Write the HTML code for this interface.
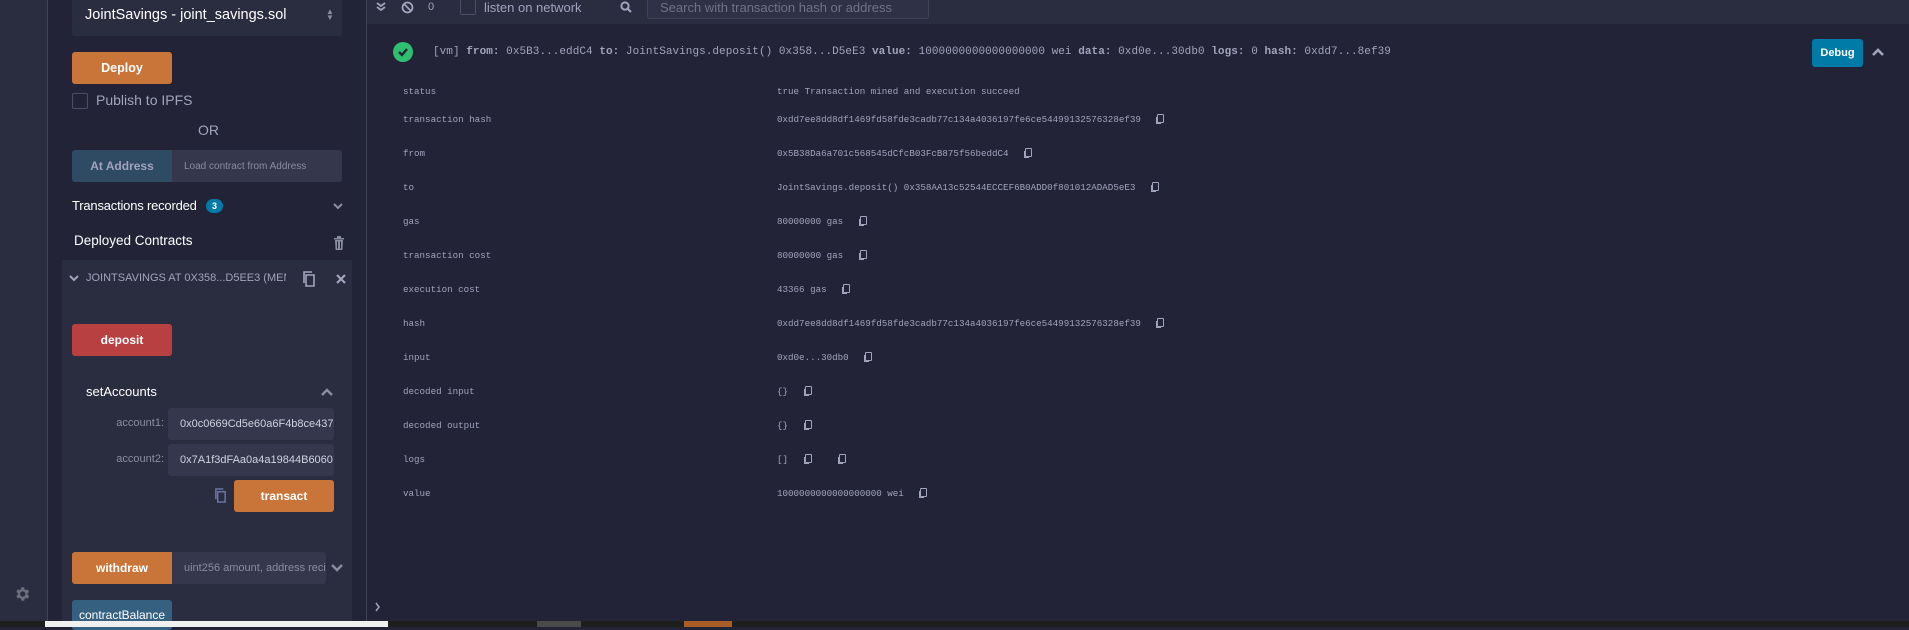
<!DOCTYPE html>
<html><head><meta charset="utf-8"><style>
*{margin:0;padding:0;box-sizing:border-box}
body{width:1909px;height:627px;overflow:hidden;background:#222336;font-family:"Liberation Sans",sans-serif;position:relative;color:#a2a3bd}
.a{position:absolute}
.btn{position:absolute;color:#fff;font-weight:bold;font-size:12px;display:flex;align-items:center;justify-content:center;border-radius:3px}
.inp{position:absolute;background:#35384c;font-size:11px;display:flex;align-items:center;border-radius:3px}
.mono{font-family:"Liberation Mono",monospace}
.row{position:absolute;font-family:"Liberation Mono",monospace;font-size:9.2px;color:#a2a3bd;white-space:nowrap}
.cp{display:inline-block;width:7px;height:9px;border:1.3px solid #a2a3bd;border-radius:1px;position:relative;vertical-align:-1px;box-shadow:-2px 2px 0 -1px #a2a3bd}
</style></head><body>
<div class="a" style="left:0;top:0;width:47px;height:621px;background:#2a2c3f"></div>
<div class="a" style="left:47px;top:0;width:1px;height:621px;background:#3f4455"></div>
<svg class="a" style="left:13px;top:585px" width="18" height="18" viewBox="0 0 24 24"><path fill="#6b6e7c" d="M19.4 13a7.5 7.5 0 000-2l2.1-1.6-2-3.5-2.5 1a7.6 7.6 0 00-1.7-1L15 3h-4l-.4 2.6a7.6 7.6 0 00-1.7 1l-2.5-1-2 3.5L6.5 11a7.5 7.5 0 000 2l-2.1 1.6 2 3.5 2.5-1c.5.4 1.1.7 1.7 1L11 21h4l.4-2.6c.6-.3 1.2-.6 1.7-1l2.5 1 2-3.5zM13 15.5a3.5 3.5 0 110-7 3.5 3.5 0 010 7z"/></svg>
<div class="a" style="left:366px;top:0;width:1px;height:621px;background:#3f4455"></div>
<div class="a" style="left:72px;top:0;width:270px;height:36px;background:#2a2c3f;border-radius:0 0 3px 3px;color:#fff;font-size:14.5px;padding:7px 0 0 13px">JointSavings - joint_savings.sol<span class="a" style="left:254px;top:9px;font-size:8px;line-height:6px;color:#8a8ca0">▲<br>▼</span></div>
<div class="btn" style="left:72px;top:52px;width:100px;height:32px;background:#c97539;font-size:12.5px">Deploy</div>
<div class="a" style="left:72px;top:93px;width:16px;height:16px;border:1px solid #4c4f63;border-radius:2px"></div>
<div class="a" style="left:96px;top:92px;font-size:14px;color:#a2a3bd">Publish to IPFS</div>
<div class="a" style="left:198px;top:122px;font-size:14px;color:#a2a3bd">OR</div>
<div class="btn" style="left:72px;top:150px;width:100px;height:32px;background:#2f4a63;color:#a2a3bd;border-radius:3px 0 0 3px">At Address</div>
<div class="inp" style="left:172px;top:150px;width:170px;height:32px;padding-left:12px;color:#8a8ca0;border-radius:0 3px 3px 0;font-size:10px">Load contract from Address</div>
<div class="a" style="left:72px;top:198px;font-size:13px;color:#fff;letter-spacing:-0.2px">Transactions recorded</div>
<div class="a" style="left:206px;top:199px;width:17px;height:14px;border-radius:7px;background:#007aa6;color:#fff;font-size:9px;font-weight:bold;text-align:center;line-height:14px">3</div>
<svg class="a" style="left:333px;top:203px" width="10" height="7"><path d="M1 1l4 4 4-4" stroke="#8a8ca0" stroke-width="2" fill="none"/></svg>
<div class="a" style="left:74px;top:233px;font-size:13.5px;color:#fff">Deployed Contracts</div>
<svg class="a" style="left:333px;top:236px" width="12" height="14" viewBox="0 0 12 14"><path fill="#8a8ca0" d="M1 2h10v1.5H1zM4 0h4v2H4zM2 4h8l-.6 10H2.6zM4 5.5v7h1v-7zM7 5.5v7h1v-7z"/></svg>
<div class="a" style="left:62px;top:260px;width:290px;height:361px;background:#2a2c3f"></div>
<svg class="a" style="left:69px;top:275px" width="10" height="7"><path d="M1 1l4 4 4-4" stroke="#a2a3bd" stroke-width="2" fill="none"/></svg>
<div class="a" style="left:86px;top:272px;font-size:11px;color:#a2a3bd;width:200px;overflow:hidden;white-space:nowrap">JOINTSAVINGS AT 0X358...D5EE3 (MEMORY)</div>
<svg class="a" style="left:302px;top:271px" width="14" height="16" viewBox="0 0 14 16"><path d="M4 4h8v11H4zM2 12V1h8" stroke="#a2a3bd" stroke-width="1.6" fill="none"/></svg>
<svg class="a" style="left:336px;top:274px" width="10" height="10"><path d="M1 1l8 8M9 1l-8 8" stroke="#a2a3bd" stroke-width="2.2"/></svg>
<div class="btn" style="left:72px;top:324px;width:100px;height:32px;background:#b84040">deposit</div>
<div class="a" style="left:86px;top:384px;font-size:13px;color:#fff">setAccounts</div>
<svg class="a" style="left:321px;top:388px" width="12" height="8"><path d="M1 7l5-5 5 5" stroke="#8a8ca0" stroke-width="2.4" fill="none"/></svg>
<div class="a" style="left:100px;top:417px;width:64px;text-align:right;font-size:11px;color:#8a8ca0">account1:</div>
<div class="inp" style="left:168px;top:408px;width:166px;height:32px;padding-left:12px;color:#d0d2e0;overflow:hidden;white-space:nowrap">0x0c0669Cd5e60a6F4b8ce437</div>
<div class="a" style="left:100px;top:453px;width:64px;text-align:right;font-size:11px;color:#8a8ca0">account2:</div>
<div class="inp" style="left:168px;top:444px;width:166px;height:32px;padding-left:12px;color:#d0d2e0;overflow:hidden;white-space:nowrap">0x7A1f3dFAa0a4a19844B6060</div>
<svg class="a" style="left:214px;top:488px" width="13" height="15" viewBox="0 0 14 16"><path d="M4 4h8v11H4zM2 12V1h8" stroke="#6b75a6" stroke-width="1.6" fill="none"/></svg>
<div class="btn" style="left:234px;top:480px;width:100px;height:32px;background:#c97539">transact</div>
<div class="btn" style="left:72px;top:552px;width:100px;height:32px;background:#c97539;border-radius:3px 0 0 3px">withdraw</div>
<div class="inp" style="left:172px;top:552px;width:154px;height:32px;padding-left:12px;color:#8a8ca0;border-radius:0 3px 3px 0;white-space:nowrap;overflow:hidden">uint256 amount, address reci</div>
<svg class="a" style="left:331px;top:564px" width="12" height="8"><path d="M1 1l5 5 5-5" stroke="#8a8ca0" stroke-width="2.4" fill="none"/></svg>
<div class="btn" style="left:72px;top:600px;width:100px;height:30px;background:#35607f;font-weight:normal;align-items:flex-start;padding-top:8px">contractBalance</div>
<div class="a" style="left:367px;top:0;width:1542px;height:24px;background:#2a2c3f"></div>
<svg class="a" style="left:376px;top:2px" width="10" height="10"><path d="M1 1l4 3 4-3M1 5l4 3 4-3" stroke="#a2a3bd" stroke-width="1.8" fill="none"/></svg>
<svg class="a" style="left:401px;top:1px" width="13" height="13"><circle cx="6.5" cy="6.5" r="5" stroke="#a2a3bd" stroke-width="1.8" fill="none"/><path d="M3 3l7 7" stroke="#a2a3bd" stroke-width="1.8"/></svg>
<div class="a" style="left:428px;top:1px;font-size:11px">0</div>
<div class="a" style="left:460px;top:0;width:16px;height:15px;border:1px solid #4c4f63;border-top:none;border-radius:0 0 2px 2px"></div>
<div class="a" style="left:484px;top:0;font-size:13px;color:#a2a3bd">listen on network</div>
<svg class="a" style="left:620px;top:1px" width="12" height="12"><circle cx="5" cy="5" r="3.6" stroke="#a2a3bd" stroke-width="2" fill="none"/><path d="M7.5 7.5l3.5 3.5" stroke="#a2a3bd" stroke-width="2.2"/></svg>
<div class="a" style="left:647px;top:0;width:282px;height:19px;background:#2f3246;border:1px solid #3f4455;border-top:none;border-radius:0 0 3px 3px;font-size:13px;color:#6f7288;padding:0 0 0 12px;line-height:16px">Search with transaction hash or address</div>
<div class="a" style="left:393px;top:42px;width:20px;height:20px;border-radius:50%;background:#2fbf71"></div>
<svg class="a" style="left:397px;top:46px" width="12" height="12"><path d="M2 6l3 3 5-6" stroke="#222336" stroke-width="2.4" fill="none"/></svg>
<div class="a mono" style="left:433px;top:46px;font-size:11px;color:#a2a3bd;white-space:nowrap;letter-spacing:0.05px">[vm]  <b>from:</b> 0x5B3...eddC4 <b>to:</b> JointSavings.deposit() 0x358...D5eE3 <b>value:</b> 1000000000000000000 wei <b>data:</b> 0xd0e...30db0 <b>logs:</b> 0 <b>hash:</b> 0xdd7...8ef39</div>
<div class="btn" style="left:1812px;top:39px;width:51px;height:28px;background:#007aa6;font-size:11px">Debug</div>
<svg class="a" style="left:1872px;top:48px" width="12" height="8"><path d="M1 7l5-5 5 5" stroke="#a2a3bd" stroke-width="2.6" fill="none"/></svg>
<div class="row" style="left:403px;top:86px">status</div><div class="row" style="left:777px;top:86px">true Transaction mined and execution succeed</div>
<div class="row" style="left:403px;top:114px">transaction hash</div><div class="row" style="left:777px;top:114px">0xdd7ee8dd8df1469fd58fde3cadb77c134a4036197fe6ce54499132576328ef39 &nbsp; <span class="cp"></span></div>
<div class="row" style="left:403px;top:148px">from</div><div class="row" style="left:777px;top:148px">0x5B38Da6a701c568545dCfcB03FcB875f56beddC4 &nbsp; <span class="cp"></span></div>
<div class="row" style="left:403px;top:182px">to</div><div class="row" style="left:777px;top:182px">JointSavings.deposit() 0x358AA13c52544ECCEF6B0ADD0f801012ADAD5eE3 &nbsp; <span class="cp"></span></div>
<div class="row" style="left:403px;top:216px">gas</div><div class="row" style="left:777px;top:216px">80000000 gas &nbsp; <span class="cp"></span></div>
<div class="row" style="left:403px;top:250px">transaction cost</div><div class="row" style="left:777px;top:250px">80000000 gas &nbsp; <span class="cp"></span></div>
<div class="row" style="left:403px;top:284px">execution cost</div><div class="row" style="left:777px;top:284px">43366 gas &nbsp; <span class="cp"></span></div>
<div class="row" style="left:403px;top:318px">hash</div><div class="row" style="left:777px;top:318px">0xdd7ee8dd8df1469fd58fde3cadb77c134a4036197fe6ce54499132576328ef39 &nbsp; <span class="cp"></span></div>
<div class="row" style="left:403px;top:352px">input</div><div class="row" style="left:777px;top:352px">0xd0e...30db0 &nbsp; <span class="cp"></span></div>
<div class="row" style="left:403px;top:386px">decoded input</div><div class="row" style="left:777px;top:386px">{} &nbsp; <span class="cp"></span></div>
<div class="row" style="left:403px;top:420px">decoded output</div><div class="row" style="left:777px;top:420px">{} &nbsp; <span class="cp"></span></div>
<div class="row" style="left:403px;top:454px">logs</div><div class="row" style="left:777px;top:454px">[] &nbsp; <span class="cp"></span> &nbsp; &nbsp; <span class="cp"></span></div>
<div class="row" style="left:403px;top:488px">value</div><div class="row" style="left:777px;top:488px">1000000000000000000 wei &nbsp; <span class="cp"></span></div>
<svg class="a" style="left:375px;top:602px" width="6" height="10"><path d="M1 1l3 4-3 4" stroke="#a2a3bd" stroke-width="1.5" fill="none"/></svg>
<div class="a" style="left:0;top:621px;width:1909px;height:6px;background:#1e1e1e"></div>
<div class="a" style="left:45px;top:621px;width:343px;height:6px;background:#f0f0f0"></div>
<div class="a" style="left:537px;top:621px;width:44px;height:6px;background:#4a4a4a"></div>
<div class="a" style="left:684px;top:621px;width:48px;height:6px;background:#a65e26"></div>
</body></html>
